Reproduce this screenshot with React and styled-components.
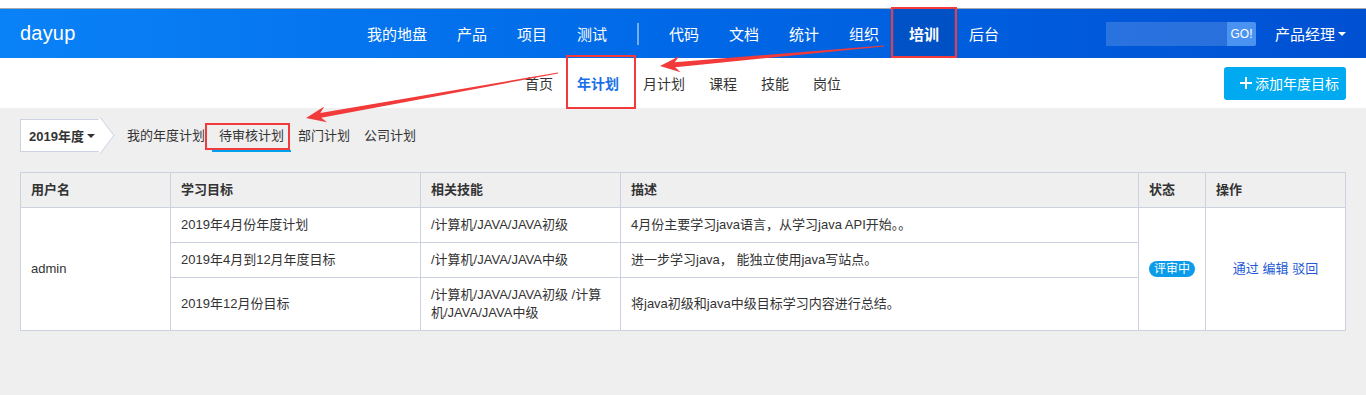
import React from "react";
import styled, { createGlobalStyle } from "styled-components";

const GlobalStyle = createGlobalStyle`
  body {
    margin: 0;
    background: #efefef;
    font-family: "Liberation Sans", "Noto Sans CJK SC", sans-serif;
    color: #333;
  }
`;

const Page = styled.div`
  position: relative;
  width: 1366px;
  height: 395px;
  overflow: hidden;
`;

const TopStrip = styled.div`
  height: 8px;
  background: #fff;
  border-bottom: 1px solid #a9a9a9;
`;

const Header = styled.header`
  height: 49px;
  display: grid;
  grid-template-columns: 1fr auto 1fr;
  align-items: center;
  background: linear-gradient(90deg, #0a82f7 0%, #0068e6 50%, #0050d2 100%);
  color: #fff;
`;

const Logo = styled.div`
  padding-left: 20px;
  font-size: 20px;
  letter-spacing: 0.2px;
`;

const MainNav = styled.nav`
  display: flex;
  align-items: center;
  height: 100%;
`;

const NavItem = styled.a`
  display: flex;
  align-items: center;
  height: 100%;
  padding: 0 15px;
  font-size: 15px;
  font-weight: ${(p) => (p.$active ? "bold" : "normal")};
  background: ${(p) => (p.$active ? "rgba(0, 0, 40, 0.14)" : "transparent")};
  cursor: pointer;
`;

const NavDivider = styled.span`
  width: 2px;
  height: 22px;
  margin: 0 15px;
  background: rgba(255, 255, 255, 0.45);
`;

const HeaderRight = styled.div`
  display: flex;
  align-items: center;
  justify-content: flex-end;
  padding-right: 20px;
`;

const SearchBox = styled.div`
  display: flex;
  height: 24px;
  margin-right: 19px;
`;

const SearchInput = styled.div`
  width: 121px;
  background: rgba(255, 255, 255, 0.16);
`;

const GoButton = styled.span`
  width: 29px;
  display: flex;
  align-items: center;
  justify-content: center;
  background: #4b93f0;
  border-radius: 0 2px 2px 0;
  font-size: 12px;
`;

const UserMenu = styled.div`
  display: flex;
  align-items: center;
  font-size: 15px;
`;

const Caret = styled.span`
  position: relative;
  z-index: 1;
  display: inline-block;
  margin-left: 3px;
  border-left: 4px solid transparent;
  border-right: 4px solid transparent;
  border-top: 4px solid ${(p) => p.$color || "#fff"};
`;

const SubBar = styled.div`
  height: 50px;
  display: grid;
  grid-template-columns: 1fr auto 1fr;
  align-items: center;
  background: #fff;
`;

const SubNav = styled.nav`
  display: flex;
  height: 100%;
  align-items: center;
`;

const SubItem = styled.a`
  padding: 0 12px;
  font-size: 14px;
  color: ${(p) => (p.$active ? "#1a6fe6" : "#333")};
  font-weight: ${(p) => (p.$active ? "bold" : "normal")};
`;

const SubRight = styled.div`
  display: flex;
  justify-content: flex-end;
  padding-right: 20px;
`;

const AddButton = styled.button`
  display: flex;
  align-items: center;
  gap: 2px;
  height: 33px;
  width: 122px;
  padding: 0 0 0 15px;
  border: none;
  border-radius: 3px;
  background: #00aaf0;
  color: #fff;
  font-family: inherit;
  font-size: 14px;
`;

const Content = styled.main`
  padding: 11px 21px 0 20px;
`;

const FilterRow = styled.div`
  display: flex;
  align-items: center;
  height: 33px;
`;

const YearSelect = styled.div`
  position: relative;
  display: flex;
  align-items: center;
  height: 31px;
  padding: 0 0 0 8px;
  width: 72px;
  background: #fff;
  border: 1px solid #cdd3e2;
  border-right: none;
  font-size: 13px;
  font-weight: bold;
  color: #333;

  &::after {
    content: "";
    position: absolute;
    top: 4px;
    right: -11px;
    width: 22px;
    height: 22px;
    background: #fff;
    border-top: 1px solid #cdd3e2;
    border-right: 1px solid #cdd3e2;
    transform: rotate(45deg) skew(8deg, 8deg);
  }
`;

const Tabs = styled.div`
  display: flex;
  height: 33px;
  margin-left: 19px;
`;

const Tab = styled.a`
  display: flex;
  align-items: center;
  padding: 0 7px;
  font-size: 13px;
  color: #333;
  border-bottom: 2px solid ${(p) => (p.$active ? "#00a0f0" : "transparent")};
`;

const Table = styled.table`
  margin-top: 20px;
  width: 1325px;
  border-collapse: collapse;
  background: #fff;
  font-size: 13px;
  color: #333;
  table-layout: fixed;

  th,
  td {
    border: 1px solid #cbd1de;
    padding: 0 10px;
    text-align: left;
    line-height: 18px;
  }

  th {
    height: 34px;
    background: #efefef;
    font-weight: bold;
  }

  td {
    height: 34px;
  }
`;

const Cell = styled.td`
  && {
    height: ${(p) => (p.$tall ? "52px" : "34px")};
    text-align: ${(p) => (p.$center ? "center" : "left")};
  }
`;

const Badge = styled.span`
  display: inline-block;
  padding: 0 5px;
  height: 16px;
  line-height: 16px;
  border-radius: 8px;
  background: #0a9be9;
  color: #fff;
  font-size: 12px;
`;

const ActionLink = styled.a`
  color: #2358d8;
`;

const Annotations = styled.svg`
  position: absolute;
  left: 0;
  top: 0;
  pointer-events: none;
`;

const arrowPoints = (x1, y1, x2, y2) => {
  const len = Math.hypot(x2 - x1, y2 - y1);
  const dx = (x2 - x1) / len;
  const dy = (y2 - y1) / len;
  const nx = -dy;
  const ny = dx;
  const head = 20;
  const hw = 8;
  const sw = 2.5;
  const bx = x2 - dx * head;
  const by = y2 - dy * head;
  const nkx = x2 - dx * (head - 5);
  const nky = y2 - dy * (head - 5);
  const p = [
    [x1 + nx * 0.4, y1 + ny * 0.4],
    [nkx + nx * sw, nky + ny * sw],
    [bx + nx * hw, by + ny * hw],
    [x2, y2],
    [bx - nx * hw, by - ny * hw],
    [nkx - nx * sw, nky - ny * sw],
    [x1 - nx * 0.4, y1 - ny * 0.4],
  ];
  return p.map((q) => q.join(",")).join(" ");
};

const rows = [
  {
    goal: "2019年4月份年度计划",
    skill: "/计算机/JAVA/JAVA初级",
    desc: "4月份主要学习java语言，从学习java API开始。。",
  },
  {
    goal: "2019年4月到12月年度目标",
    skill: "/计算机/JAVA/JAVA中级",
    desc: "进一步学习java， 能独立使用java写站点。",
  },
  {
    goal: "2019年12月份目标",
    skill: "/计算机/JAVA/JAVA初级 /计算机/JAVA/JAVA中级",
    desc: "将java初级和java中级目标学习内容进行总结。",
    tall: true,
  },
];

const mainNav = ["我的地盘", "产品", "项目", "测试"];
const mainNav2 = ["代码", "文档", "统计", "组织", "培训", "后台"];
const subNav = ["首页", "年计划", "月计划", "课程", "技能", "岗位"];
const tabs = ["我的年度计划", "待审核计划", "部门计划", "公司计划"];

export default function App() {
  return (
    <Page>
      <GlobalStyle />
      <TopStrip />
      <Header>
        <Logo>dayup</Logo>
        <MainNav>
          {mainNav.map((t) => (
            <NavItem key={t}>{t}</NavItem>
          ))}
          <NavDivider />
          {mainNav2.map((t) => (
            <NavItem key={t} $active={t === "培训"}>
              {t}
            </NavItem>
          ))}
        </MainNav>
        <HeaderRight>
          <SearchBox>
            <SearchInput />
            <GoButton>GO!</GoButton>
          </SearchBox>
          <UserMenu>
            产品经理
            <Caret />
          </UserMenu>
        </HeaderRight>
      </Header>
      <SubBar>
        <div />
        <SubNav>
          {subNav.map((t) => (
            <SubItem key={t} $active={t === "年计划"}>
              {t}
            </SubItem>
          ))}
        </SubNav>
        <SubRight>
          <AddButton>
            <svg width="14" height="14" viewBox="0 0 14 14">
              <path d="M7 1v12M1 7h12" stroke="#fff" strokeWidth="2" />
            </svg>
            添加年度目标
          </AddButton>
        </SubRight>
      </SubBar>
      <Content>
        <FilterRow>
          <YearSelect>
            2019年度
            <Caret $color="#333" />
          </YearSelect>
          <Tabs>
            {tabs.map((t) => (
              <Tab key={t} $active={t === "待审核计划"}>
                {t}
              </Tab>
            ))}
          </Tabs>
        </FilterRow>
        <Table>
          <colgroup>
            <col style={{ width: 150 }} />
            <col style={{ width: 250 }} />
            <col style={{ width: 200 }} />
            <col style={{ width: 518 }} />
            <col style={{ width: 67 }} />
            <col style={{ width: 140 }} />
          </colgroup>
          <thead>
            <tr>
              <th>用户名</th>
              <th>学习目标</th>
              <th>相关技能</th>
              <th>描述</th>
              <th>状态</th>
              <th>操作</th>
            </tr>
          </thead>
          <tbody>
            {rows.map((r, i) => (
              <tr key={r.goal}>
                {i === 0 && <Cell rowSpan={3}>admin</Cell>}
                <Cell $tall={r.tall}>{r.goal}</Cell>
                <Cell $tall={r.tall}>{r.skill}</Cell>
                <Cell $tall={r.tall}>{r.desc}</Cell>
                {i === 0 && (
                  <Cell rowSpan={3} $center>
                    <Badge>评审中</Badge>
                  </Cell>
                )}
                {i === 0 && (
                  <Cell rowSpan={3} $center>
                    <ActionLink>通过</ActionLink> <ActionLink>编辑</ActionLink>{" "}
                    <ActionLink>驳回</ActionLink>
                  </Cell>
                )}
              </tr>
            ))}
          </tbody>
        </Table>
      </Content>
      <Annotations width="1366" height="395">
        <g fill="none" stroke="#f23a3a" strokeWidth="2">
          <rect x="892" y="8" width="64" height="49" />
          <rect x="567" y="56" width="68" height="52" />
          <rect x="206" y="124" width="83" height="25" />
        </g>
        <g fill="#f23a3a">
          <polygon points={arrowPoints(884, 46, 660, 66)} />
          <polygon points={arrowPoints(558, 73, 306, 118)} />
        </g>
      </Annotations>
    </Page>
  );
}
